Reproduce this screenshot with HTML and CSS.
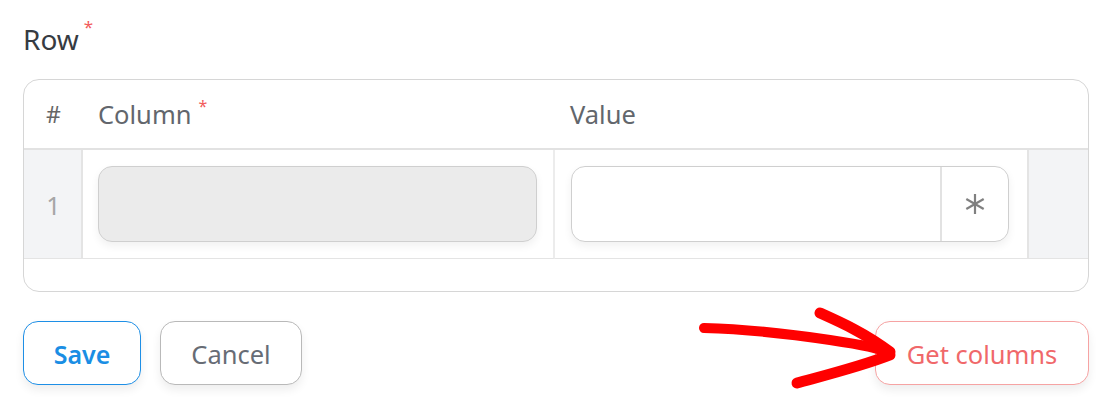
FILE: index.html
```html
<!DOCTYPE html>
<html>
<head>
<meta charset="utf-8">
<link rel="stylesheet" href="styles.css">
</head>
<body>
<div class="page">
  <div class="field-label">Row<span class="req">*</span></div>
  <div class="table">
    <div class="cell head idx">#</div>
    <div class="cell head">Column<span class="req small">*</span></div>
    <div class="cell head">Value</div>
    <div class="cell head"></div>

    <div class="cell body num">1</div>
    <div class="cell body col-cell"><div class="input disabled"></div></div>
    <div class="cell body val-cell">
      <div class="input group">
        <div class="grow"></div>
        <div class="addon">
          <svg width="24" height="24" viewBox="0 0 24 24"><g stroke="#808080" stroke-width="2.2" stroke-linecap="butt"><line x1="12" y1="2" x2="12" y2="22"/><line x1="3.3" y1="7" x2="20.7" y2="17"/><line x1="3.3" y1="17" x2="20.7" y2="7"/></g></svg>
        </div>
      </div>
    </div>
    <div class="cell body side"></div>

    <div class="foot"></div>
  </div>
  <div class="actions">
    <div class="left">
      <button class="btn save">Save</button>
      <button class="btn cancel">Cancel</button>
    </div>
    <button class="btn getcols">Get columns</button>
  </div>
  <svg class="arrow" width="220" height="100" viewBox="690 300 220 100">
    <g fill="none" stroke="#ff0000" stroke-linecap="round" stroke-linejoin="round">
      <path d="M704 328 C 740 329, 790 334, 830 340 S 875 348, 890 353" stroke-width="10"/>
      <path d="M820 313 C 840 322, 865 333, 890 352" stroke-width="11"/>
      <path d="M797 383 C 830 374, 862 366, 890 355" stroke-width="11"/>
    </g>
  </svg>
</div>
</body>
</html>
```
FILE: styles.css
```css
html, body {
  margin: 0;
  padding: 0;
  background: #ffffff;
}
body {
  font-family: "Noto Sans", "Open Sans", sans-serif;
}
.page {
  position: relative;
  width: 1116px;
  height: 405px;
  padding: 20px 27px 0 23px;
  box-sizing: border-box;
}
.field-label {
  font-size: 28px;
  color: #363b42;
  line-height: 38px;
  height: 38px;
  margin-left: 0;
  margin-bottom: 21px;
}
.req {
  color: #f25b5b;
  font-size: 17px;
  vertical-align: top;
  position: relative;
  top: -12px;
  margin-left: 5px;
}
.req.small {
  font-size: 16px;
  top: -8px;
  margin-left: 7px;
}
.table {
  display: grid;
  grid-template-columns: 59px 472px 474px 59px;
  grid-template-rows: 70px 109px 32px;
  border: 1px solid #d6d6d6;
  border-radius: 16px;
  overflow: hidden;
  width: 1064px;
}
.cell.head {
  display: flex;
  align-items: center;
  padding-left: 15px;
  font-size: 25.5px;
  color: #62666c;
  border-bottom: 2px solid #e2e2e2;
  padding-top: 0;
}
.cell.head.idx {
  padding-left: 22px;
  font-size: 23px;
  color: #666;
}
.cell.body {
  border-bottom: 1px solid #e4e4e4;
}
.cell.num {
  background: #f3f4f6;
  border-right: 2px solid #e4e4e4;
  display: flex;
  align-items: center;
  justify-content: center;
  font-size: 25px;
  color: #a6a6a6;
  padding-left: 2px;
  padding-top: 2px;
}
.cell.col-cell {
  padding: 16px 16px 0 15px;
  border-right: 2px solid #ececec;
}
.cell.val-cell {
  padding: 16px 18px 0 16px;
  border-right: 2px solid #e4e4e4;
}
.cell.side {
  background: #f3f4f6;
}
.input {
  height: 76px;
  box-sizing: border-box;
  border: 1px solid #cfcfcf;
  border-radius: 14px;
  box-shadow: 0 4px 8px rgba(0, 0, 0, 0.06);
}
.input.disabled {
  background: #ebebeb;
}
.input.group {
  display: flex;
  background: #fff;
  overflow: hidden;
}
.grow {
  flex: 1;
}
.addon {
  width: 66px;
  border-left: 2px solid #e2e2e2;
  display: flex;
  align-items: center;
  justify-content: center;
}
.foot {
  grid-column: 1 / -1;
}
.actions {
  display: flex;
  justify-content: space-between;
  margin-top: 29px;
  width: 1066px;
}
.left {
  display: flex;
  gap: 19px;
}
.btn {
  height: 64px;
  box-sizing: border-box;
  border-radius: 15px;
  background: #fff;
  font-family: "Noto Sans", "Open Sans", sans-serif;
  font-size: 25.5px;
  padding: 2px 0 0 0;
  box-shadow: 0 5px 10px rgba(0, 0, 0, 0.07);
}
.btn.save {
  width: 118px;
  border: 1px solid #1e8fe6;
  color: #1a8ee4;
  font-weight: 600;
  font-size: 25px;
}
.btn.cancel {
  width: 142px;
  border: 1px solid #b9b9b9;
  color: #676c75;
}
.btn.getcols {
  width: 214px;
  border: 1px solid #f6a3a3;
  color: #f0686a;
}
.arrow {
  position: absolute;
  left: 690px;
  top: 300px;
}
```
